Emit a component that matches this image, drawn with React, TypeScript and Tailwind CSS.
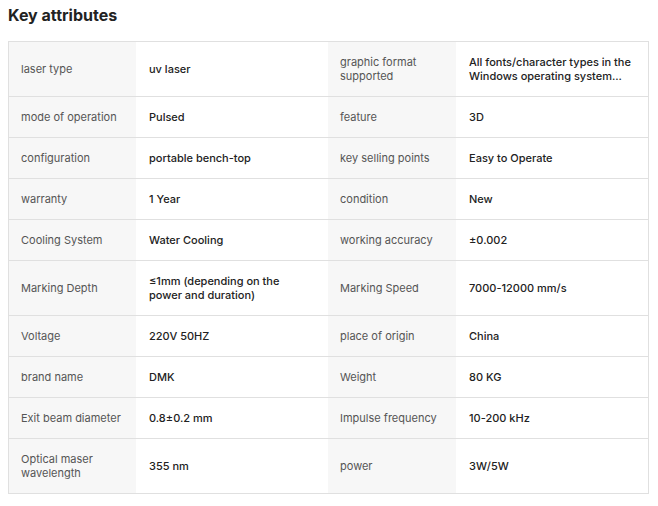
const rows: [string, string, string, string][] = [
  ["laser type", "uv laser", "graphic format supported", "All fonts/character types in the Windows operating system..."],
  ["mode of operation", "Pulsed", "feature", "3D"],
  ["configuration", "portable bench-top", "key selling points", "Easy to Operate"],
  ["warranty", "1 Year", "condition", "New"],
  ["Cooling System", "Water Cooling", "working accuracy", "±0.002"],
  ["Marking Depth", "≤1mm (depending on the power and duration)", "Marking Speed", "7000-12000 mm/s"],
  ["Voltage", "220V 50HZ", "place of origin", "China"],
  ["brand name", "DMK", "Weight", "80 KG"],
  ["Exit beam diameter", "0.8±0.2 mm", "Impulse frequency", "10-200 kHz"],
  ["Optical maser wavelength", "355 nm", "power", "3W/5W"],
];

function Label({ text, first }: { text: string; first?: boolean }) {
  return (
    <div
      className={`${first ? "w-[127px]" : "w-[128px]"} shrink-0 bg-[#f7f7f7] px-3 py-[13px] flex items-center text-[#555555]`}
    >
      {text}
    </div>
  );
}

function Value({ text }: { text: string }) {
  return (
    <div className="w-[192px] shrink-0 px-[13px] py-[13px] flex items-center text-[#222222] font-medium">
      {text}
    </div>
  );
}

export default function App() {
  return (
    <div className="bg-white w-[658px] h-[506px] pl-2 pt-[3px]" style={{ fontFamily: "Inter, 'Noto Sans', sans-serif" }}>
      <h2 className="text-[16px] leading-6 font-bold text-[#222222]">Key attributes</h2>
      <div className="mt-[14px] w-[641px] border border-[#e0e0e0] text-[11px] leading-[14px]">
        {rows.map((r, i) => (
          <div key={i} className={`flex ${i > 0 ? "border-t border-[#e0e0e0]" : ""}`}>
            <Label text={r[0]} first />
            <Value text={r[1]} />
            <Label text={r[2]} />
            <Value text={r[3]} />
          </div>
        ))}
      </div>
    </div>
  );
}
